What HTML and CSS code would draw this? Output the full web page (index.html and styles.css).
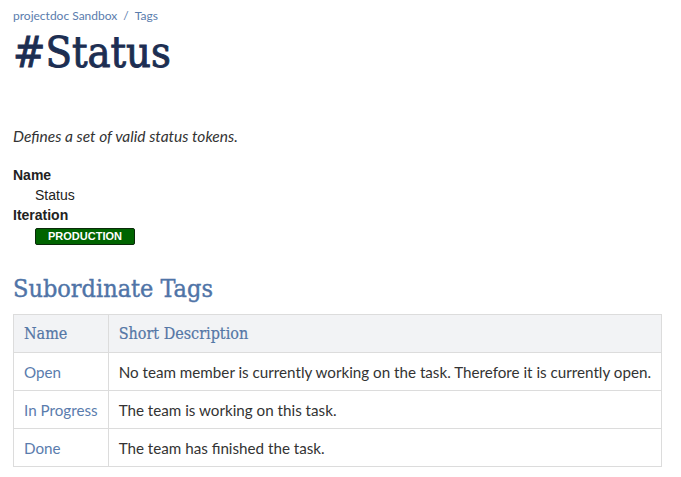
FILE: index.html
```html
<!DOCTYPE html>
<html>
<head>
<meta charset="utf-8">
<link rel="stylesheet" href="styles.css">
</head>
<body>
<div class="page">
  <nav class="crumbs"><a>projectdoc Sandbox</a><span class="sep">/</span><a>Tags</a></nav>
  <h1 class="title">#Status</h1>
  <p class="desc">Defines a set of valid status tokens.</p>
  <dl class="props">
    <dt>Name</dt>
    <dd>Status</dd>
    <dt>Iteration</dt>
    <dd><span class="badge">PRODUCTION</span></dd>
  </dl>
  <h2 class="section">Subordinate Tags</h2>
  <table class="tags">
    <thead>
      <tr><th class="c1">Name</th><th>Short Description</th></tr>
    </thead>
    <tbody>
      <tr><td class="c1"><a>Open</a></td><td>No team member is currently working on the task. Therefore it is currently open.</td></tr>
      <tr><td class="c1"><a>In Progress</a></td><td>The team is working on this task.</td></tr>
      <tr><td class="c1"><a>Done</a></td><td>The team has finished the task.</td></tr>
    </tbody>
  </table>
</div>
</body>
</html>
```
FILE: styles.css
```css
html, body { margin: 0; padding: 0; background: #fff; }
body { font-family: "Source Sans Pro", Lato, "Liberation Sans", sans-serif; color: #333; }
.page { padding: 8px 13px 0 13px; }
.crumbs { font-size: 12px; color: #5a7cad; line-height: 16px; }
.crumbs .sep { margin: 0 6px; }
.title { font-family: "DejaVu Serif Condensed", "DejaVu Serif", serif; font-weight: normal; font-size: 43px; line-height: 48px; color: #1c2e52; margin: 4px 0 0 0; -webkit-text-stroke: 0.9px #1c2e52; }
.desc { font-style: italic; font-size: 15.5px; color: #333; margin: 50px 0 0 0; line-height: 20px; }
.props { margin: 19px 0 0 0; font-family: "Liberation Sans", Arial, sans-serif; font-size: 14px; line-height: 20px; color: #222; }
.props dt { font-weight: bold; }
.props dd { margin: 0 0 0 22px; }
.props dd.status { margin-top: -1px; }
.badge { display: inline-block; width: 100px; height: 17px; box-sizing: border-box; background: #006400; border: 1px solid #0a2a0a; border-radius: 2px; color: #fff; font-size: 11px; font-weight: bold; text-align: center; line-height: 15px; vertical-align: middle; }
.section { font-family: "DejaVu Serif Condensed", "DejaVu Serif", serif; font-weight: normal; font-size: 25px; color: #4f74a7; margin: 28px 0 0 0; line-height: 32px; -webkit-text-stroke: 0.4px #4f74a7; }
.tags { margin-top: 9px; border-collapse: collapse; width: 649px; font-size: 15.2px; }
.tags th, .tags td { border: 1px solid #dcdcdc; text-align: left; padding: 0 10px; height: 37px; }
.tags th { background: #f2f3f5; font-family: "DejaVu Serif Condensed", "DejaVu Serif", serif; font-weight: normal; color: #5577a6; font-size: 16px; -webkit-text-stroke: 0.2px #5577a6; }
.tags td { color: #333; white-space: nowrap; }
.tags .c1 { width: 74px; }
.tags a { color: #5a7cad; }
```
